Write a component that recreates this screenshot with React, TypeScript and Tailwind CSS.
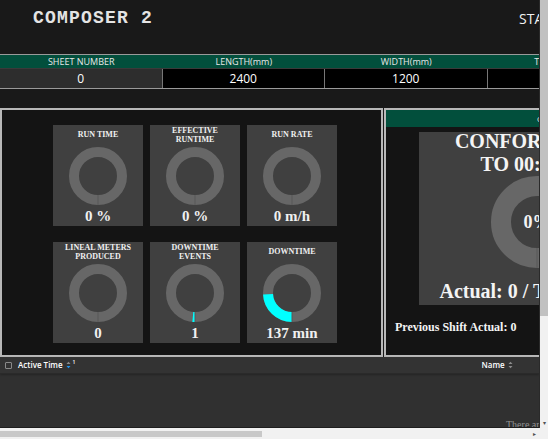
import React from "react";

type Metric = { title: string; value: string; pct: number };

const metrics: Metric[] = [
  { title: "RUN TIME", value: "0 %", pct: 0 },
  { title: "EFFECTIVE RUNTIME", value: "0 %", pct: 0 },
  { title: "RUN RATE", value: "0 m/h", pct: 0 },
  { title: "LINEAL METERS PRODUCED", value: "0", pct: 0 },
  { title: "DOWNTIME EVENTS", value: "1", pct: 0.015 },
  { title: "DOWNTIME", value: "137 min", pct: 0.24 },
];

const sheetCols = [
  { label: "SHEET NUMBER", value: "0" },
  { label: "LENGTH(mm)", value: "2400" },
  { label: "WIDTH(mm)", value: "1200" },
  { label: "THICKNESS(mm)", value: "" },
];

// ring starts at 6 o'clock and runs clockwise
const Donut = ({ size, width, pct }: { size: number; width: number; pct: number }) => {
  const c = size / 2;
  const r = c - width / 2;
  const len = 2 * Math.PI * r;
  return (
    <svg width={size} height={size} viewBox={`0 0 ${size} ${size}`} className="block">
      <circle cx={c} cy={c} r={r} fill="none" stroke="#676767" strokeWidth={width} />
      {pct > 0 && (
        <circle
          cx={c}
          cy={c}
          r={r}
          fill="none"
          stroke="#00ffff"
          strokeWidth={width}
          strokeDasharray={`${len * pct} ${len}`}
          transform={`rotate(90 ${c} ${c})`}
        />
      )}
      <line x1={c} y1={c + r - width / 2} x2={c} y2={size} stroke="#585858" strokeWidth={1} />
    </svg>
  );
};

const MetricCard = ({ m }: { m: Metric }) => (
  <div className="w-[90px] h-[101px] bg-[#404040] flex flex-col items-center font-['Liberation_Serif',serif] font-bold text-[#f0f0f0]">
    <div className="h-[19px] w-full px-2 flex items-center justify-center text-center text-[8px] leading-[9px]">
      {m.title}
    </div>
    <div className="mt-[3px]">
      <Donut size={58} width={10} pct={m.pct} />
    </div>
    <div className="mt-[4px] text-[15px] leading-[15px] whitespace-nowrap">{m.value}</div>
  </div>
);

const SortIcon = ({ active }: { active?: boolean }) => (
  <svg width="5" height="8" viewBox="0 0 5 8" className="block">
    <path d="M0.5 3 L2.5 0.8 L4.5 3 Z" fill="#8c8c8c" />
    <path d="M0.5 5 L2.5 7.2 L4.5 5 Z" fill={active ? "#2196f3" : "#8c8c8c"} />
  </svg>
);

export default function App() {
  return (
    <div className="w-[548px] h-[439px] overflow-hidden flex flex-col bg-[#191919]">
      <div className="flex flex-1 min-h-0">
        <div className="w-[540px] shrink-0 overflow-hidden flex flex-col border-r border-[#2a2a2a]">
          {/* title bar */}
          <div className="h-[54px] flex shrink-0">
            <div className="w-[519px] shrink-0 pl-[33px] pt-[9px] font-['Liberation_Mono',monospace] font-bold text-[18px] leading-[18px] tracking-[1.2px] text-[#e4e4e4] whitespace-nowrap">
              COMPOSER 2
            </div>
            <div className="shrink-0 pt-[9px] font-['Open_Sans',sans-serif] text-[14px] leading-[19px] text-[#f2f2f2] whitespace-nowrap">
              STATUS
            </div>
          </div>

          {/* sheet table */}
          <div className="w-[650px] shrink-0 border-t border-b border-[#9a9a9a] font-['Open_Sans',sans-serif]">
            <div className="grid grid-cols-4 h-[13px] bg-[#024f3c] text-[#e8e8e8] text-[9px] leading-[13px] text-center">
              {sheetCols.map((c) => (
                <div key={c.label} className="whitespace-nowrap">{c.label}</div>
              ))}
            </div>
            <div className="grid grid-cols-4 h-[20px] border-t border-[#3a3a3a] text-white text-[12px] leading-[19px] text-center">
              {sheetCols.map((c, i) => (
                <div
                  key={c.label}
                  className={i === 0 ? "bg-[#2d2d2d] border-r border-[#777]" : "bg-black border-r border-[#777]"}
                >
                  {c.value}
                </div>
              ))}
            </div>
          </div>

          <div className="h-[19px] shrink-0" />

          {/* panels */}
          <div className="flex h-[249px] shrink-0">
            <div className="w-[383px] shrink-0 border-2 border-[#b8b8b8] bg-[#141414] pl-[51px] pt-[15px]">
              <div className="grid grid-cols-[90px_90px_90px] gap-x-[7px] gap-y-[16px]">
                {metrics.map((m) => (
                  <MetricCard key={m.title} m={m} />
                ))}
              </div>
            </div>
            <div className="w-[300px] shrink-0 ml-[1px] border-2 border-[#b8b8b8] bg-[#141414] flex flex-col">
              <div className="h-[17px] bg-[#024f3c] pl-[151px] font-['Open_Sans',sans-serif] text-[8px] leading-[17px] text-[#e8e8e8] whitespace-nowrap">
                CONFORMANCE
              </div>
              <div className="ml-[33px] mt-[5px] w-[236px] h-[173px] bg-[#404040] flex flex-col items-center font-['Liberation_Serif',serif] font-bold text-[#f4f4f4]">
                <div className="-mt-[2px] text-[20px] leading-[23px] text-center whitespace-nowrap">
                  <div className="mr-[2px]">CONFORMANCE</div>
                  <div className="mr-[6px]">TO 00:00:00</div>
                </div>
                <div className="relative">
                  <Donut size={92} width={20} pct={0} />
                  <div className="absolute inset-0 flex items-center justify-center text-[18px]">0%</div>
                </div>
                <div className="mt-[12px] mr-[24px] text-[20px] leading-[23px] whitespace-nowrap">Actual: 0 / Target: 0</div>
              </div>
              <div className="pl-[9px] mt-[15px] font-['Liberation_Serif',serif] font-bold text-[12px] leading-[14px] text-[#f4f4f4] whitespace-nowrap">
                Previous Shift Actual: 0
              </div>
            </div>
          </div>

          {/* bottom grid */}
          <div className="h-[71px] shrink-0 flex flex-col bg-[#303030] border-b border-[#1e1e1e]">
            <div className="h-[17px] shrink-0 flex items-center bg-[#333333] border-b border-[#2a2a2a] shadow-[0_1px_2px_rgba(0,0,0,0.25)] font-['Open_Sans',sans-serif] font-semibold text-[8px] text-white">
              <div className="ml-[5px] w-[7px] h-[7px] border border-[#8a8a8a] rounded-[1px]" />
              <span className="ml-[6px] whitespace-nowrap">Active Time</span>
              <span className="ml-[3px]">
                <SortIcon active />
              </span>
              <span className="ml-[2px] -mt-[5px] text-[5px]">1</span>
              <span className="ml-[406px] whitespace-nowrap">Name</span>
              <span className="ml-[3px]">
                <SortIcon />
              </span>
            </div>
            <div className="flex-1 flex items-end overflow-hidden pl-[506px]">
              <span className="font-['Liberation_Serif',serif] text-[10px] leading-[10px] -mb-[3px] text-[#939393] whitespace-nowrap">
                There are no rows
              </span>
            </div>
          </div>
        </div>

        {/* vertical scrollbar */}
        <div className="w-[8px] shrink-0 flex flex-col bg-[#f1f1f1]">
          <div className="h-[316px] bg-[#c1c1c1]" />
          <div className="flex-1 flex items-end justify-center pb-[1px] text-[6px] leading-[8px] text-[#505050]">▾</div>
        </div>
      </div>

      {/* horizontal scrollbar */}
      <div className="h-[11px] shrink-0 flex items-start bg-[#f1f1f1] pt-[3px]">
        <div className="w-[262px] h-[6px] bg-[#c8c8c8]" />
        <div className="ml-[271px] text-[6px] leading-[6px] text-[#505050]">▸</div>
      </div>
    </div>
  );
}
